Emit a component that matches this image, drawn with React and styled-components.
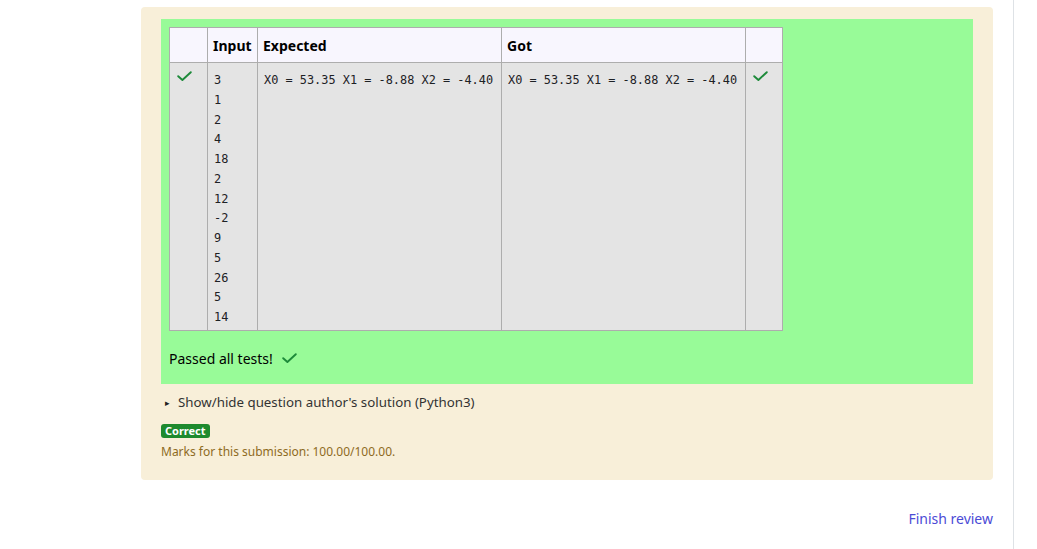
import styled, { createGlobalStyle } from "styled-components";

const GlobalStyle = createGlobalStyle`
  html, body {
    margin: 0;
    padding: 0;
    background: #fff;
    font-family: "Noto Sans", "Open Sans", sans-serif;
    color: #1d2125;
  }
`;

const inputs = ["3", "1", "2", "4", "18", "2", "12", "-2", "9", "5", "26", "5", "14"];
const result = "X0 = 53.35 X1 = -8.88 X2 = -4.40";

const Check = ({ size = 15 }) => (
  <CheckSvg width={size} height={size * 0.7} viewBox="0 0 15 10.5" fill="none">
    <path d="M1.2 5.2 L5.4 9 L13.8 1.2" stroke="#1d8a3a" strokeWidth="1.9" strokeLinecap="round" strokeLinejoin="round" />
  </CheckSvg>
);

const App = () => {
  return (
    <>
      <GlobalStyle />
      <Page>
        <Main>
          <Outcome>
            <Feedback>
              <Results>
                <thead>
                  <tr>
                    <Th w={38}></Th>
                    <Th w={50}>Input</Th>
                    <Th w={244}>Expected</Th>
                    <Th w={244}>Got</Th>
                    <Th w={37}></Th>
                  </tr>
                </thead>
                <tbody>
                  <tr>
                    <Td><Mark><Check /></Mark></Td>
                    <Td><Mono>{inputs.join("\n")}</Mono></Td>
                    <Td><Mono>{result}</Mono></Td>
                    <Td><Mono>{result}</Mono></Td>
                    <Td><Mark><Check /></Mark></Td>
                  </tr>
                </tbody>
              </Results>
              <Passed>
                Passed all tests! <Check />
              </Passed>
            </Feedback>
            <Toggle>
              <Arrow>▸</Arrow>Show/hide question author's solution (Python3)
            </Toggle>
            <Badge>Correct</Badge>
            <Marks>Marks for this submission: 100.00/100.00.</Marks>
          </Outcome>
          <Footer>
            <FinishLink>Finish review</FinishLink>
          </Footer>
        </Main>
        <Side />
      </Page>
    </>
  );
};

const Page = styled.div`
  display: flex;
  min-height: 549px;
`;
const Main = styled.div`
  width: 1014px;
  box-sizing: border-box;
  padding: 7px 20px 0 141px;
  border-right: 1px solid #dee2e6;
`;
const Side = styled.div`
  flex: 1;
`;
const Outcome = styled.div`
  background: #f8efd9;
  border-radius: 4px;
  padding: 12px 20px 20px;
`;
const Feedback = styled.div`
  background: #98fb98;
  padding: 8px 8px 0;
  height: 365px;
  box-sizing: border-box;
`;
const Results = styled.table`
  border-collapse: collapse;
  table-layout: fixed;
  width: 614px;
`;
const Th = styled.th`
  width: ${(p) => p.w}px;
  height: 35px;
  box-sizing: border-box;
  border: 1px solid #adadad;
  background: #f8f6fe;
  text-align: left;
  padding: 1px 5px 0;
  font-size: 14px;
  font-weight: 700;
  color: #000;
`;
const Td = styled.td`
  height: 268px;
  box-sizing: border-box;
  border: 1px solid #adadad;
  background: #e4e4e4;
  vertical-align: top;
  padding: 8px 5px 0 6px;
`;
const Mono = styled.pre`
  margin: 0;
  font-family: "DejaVu Sans Mono", "Liberation Mono", monospace;
  font-size: 11.9px;
  line-height: 19.75px;
  color: #1d2125;
  white-space: pre;
`;
const Mark = styled.div`
  margin-top: 0;
  padding-left: 1px;
`;
const CheckSvg = styled.svg`
  display: block;
`;
const Passed = styled.div`
  display: flex;
  align-items: center;
  gap: 9px;
  margin-top: 18px;
  font-size: 14px;
  color: #000;
`;
const Toggle = styled.div`
  display: flex;
  align-items: center;
  margin-top: 9px;
  font-size: 13.3px;
  color: #333;
`;
const Arrow = styled.span`
  font-size: 9px;
  width: 17px;
  padding-left: 4px;
  box-sizing: border-box;
  color: #222;
`;
const Badge = styled.span`
  display: inline-block;
  margin-top: 13px;
  background: #1e8a2e;
  color: #fff;
  font-size: 11px;
  font-weight: 700;
  line-height: 14px;
  padding: 0 4px;
  border-radius: 3px;
`;
const Marks = styled.div`
  margin-top: 3px;
  font-size: 12px;
  color: #8e6b1f;
`;
const Footer = styled.div`
  display: flex;
  justify-content: flex-end;
  padding-top: 29px;
`;
const FinishLink = styled.a`
  font-size: 14px;
  color: #4b4bd6;
  cursor: pointer;
`;

export default App;
